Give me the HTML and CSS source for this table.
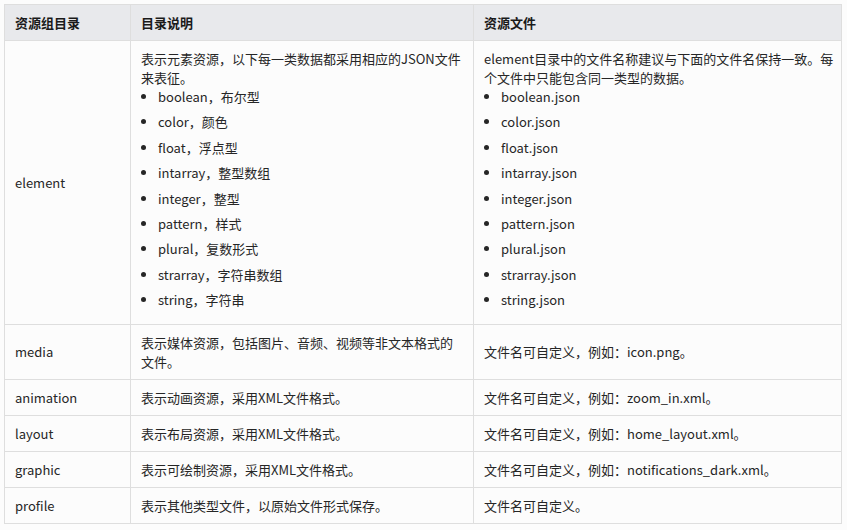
FILE: index.html
```html
<!DOCTYPE html>
<html lang="zh-CN">
<head>
<meta charset="utf-8">
<title>资源组目录</title>
<link rel="stylesheet" href="styles.css">
</head>
<body>
<div class="page">
<table class="res-table">
  <colgroup>
    <col class="c1">
    <col class="c2">
    <col class="c3">
  </colgroup>
  <thead>
    <tr>
      <th>资源组目录</th>
      <th>目录说明</th>
      <th>资源文件</th>
    </tr>
  </thead>
  <tbody>
    <tr>
      <td class="name">element</td>
      <td>
        <p>表示元素资源，以下每一类数据都采用相应的JSON文件来表征。</p>
        <ul>
          <li>boolean，布尔型</li>
          <li>color，颜色</li>
          <li>float，浮点型</li>
          <li>intarray，整型数组</li>
          <li>integer，整型</li>
          <li>pattern，样式</li>
          <li>plural，复数形式</li>
          <li>strarray，字符串数组</li>
          <li>string，字符串</li>
        </ul>
      </td>
      <td class="files">
        <p>element目录中的文件名称建议与下面的文件名保持一致。每个文件中只能包含同一类型的数据。</p>
        <ul>
          <li>boolean.json</li>
          <li>color.json</li>
          <li>float.json</li>
          <li>intarray.json</li>
          <li>integer.json</li>
          <li>pattern.json</li>
          <li>plural.json</li>
          <li>strarray.json</li>
          <li>string.json</li>
        </ul>
      </td>
    </tr>
    <tr>
      <td class="name">media</td>
      <td>表示媒体资源，包括图片、音频、视频等非文本格式的文件。</td>
      <td class="files">文件名可自定义，例如：icon.png。</td>
    </tr>
    <tr>
      <td class="name">animation</td>
      <td>表示动画资源，采用XML文件格式。</td>
      <td class="files">文件名可自定义，例如：zoom_in.xml。</td>
    </tr>
    <tr>
      <td class="name">layout</td>
      <td>表示布局资源，采用XML文件格式。</td>
      <td class="files">文件名可自定义，例如：home_layout.xml。</td>
    </tr>
    <tr>
      <td class="name">graphic</td>
      <td>表示可绘制资源，采用XML文件格式。</td>
      <td class="files">文件名可自定义，例如：notifications_dark.xml。</td>
    </tr>
    <tr>
      <td class="name">profile</td>
      <td>表示其他类型文件，以原始文件形式保存。</td>
      <td class="files">文件名可自定义。</td>
    </tr>
  </tbody>
</table>
</div>
</body>
</html>
```

FILE: styles.css
```css
html, body {
  margin: 0;
  padding: 0;
  background: #fcfcfc;
}

.page {
  padding: 4px;
  font-family: "Noto Sans CJK SC", "Noto Sans", sans-serif;
  font-size: 13px;
  line-height: 19px;
  color: #262626;
}

.res-table {
  border-collapse: collapse;
  width: 837px;
  table-layout: fixed;
  background: #fcfcfc;
}

.c1 { width: 126px; }
.c2 { width: 343px; }
.c3 { width: 368px; }

.res-table th,
.res-table td {
  border: 1px solid #dedede;
  padding: 8px 10px;
  text-align: left;
  vertical-align: middle;
}

.res-table th {
  background: #e8e9ec;
  font-weight: bold;
  color: #1a1a1a;
}

.res-table td.files {
  padding-right: 3px;
}

.res-table p {
  margin: 0;
}

.res-table ul {
  margin: 0;
  padding-left: 17px;
  list-style: disc;
}

.res-table li {
  margin-bottom: 6.4px;
}
```
